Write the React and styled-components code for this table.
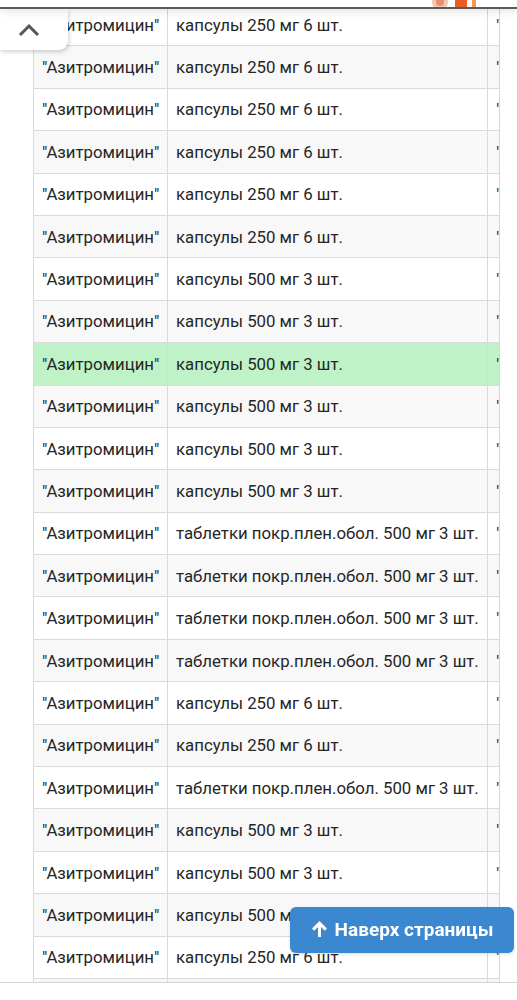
import React from "react";
import styled, { createGlobalStyle } from "styled-components";

const GlobalStyle = createGlobalStyle`
  html, body {
    margin: 0;
    padding: 0;
    background: #fff;
    font-family: Roboto, "Noto Sans", "Liberation Sans", sans-serif;
    color: #262626;
  }
`;

const Header = styled.div`
  position: fixed;
  top: 0;
  left: 0;
  right: 0;
  height: 7px;
  background: #fff;
  border-bottom: 2px solid #5a5a5a;
  box-shadow: 0 2px 8px rgba(0, 0, 0, 0.12);
  z-index: 5;
  overflow: hidden;
`;

const Logo = styled.svg`
  position: absolute;
  left: 428px;
  top: -10px;
`;

const CollapseButton = styled.button`
  position: fixed;
  top: 9px;
  left: 0;
  width: 68px;
  height: 41px;
  background: #fff;
  border: 0;
  border-radius: 0 0 9px 0;
  box-shadow: 1px 2px 4px rgba(0, 0, 0, 0.18);
  display: flex;
  align-items: center;
  justify-content: center;
  padding: 0 10px 0 0;
  z-index: 4;
`;

const Main = styled.div`
  padding: 3px 0 40px 33px;
`;

const TableWrap = styled.div`
  width: 466px;
  overflow: hidden;
  border-right: 1px solid #d6d6d6;
`;

const Table = styled.table`
  border-collapse: collapse;
  table-layout: fixed;
  width: 700px;
  font-size: 16.8px;
`;

const Row = styled.tr`
  height: 42.4px;
  background: ${p => (p.$active ? "#bff3c7" : p.$odd ? "#f8f8f8" : "#fff")};
`;

const Cell = styled.td`
  border: 1px solid #dadada;
  padding: 0 8px;
  white-space: nowrap;
  overflow: hidden;
  vertical-align: middle;
  line-height: 20px;
`;

const ToTopButton = styled.button`
  position: fixed;
  left: 290px;
  top: 907px;
  width: 224px;
  height: 46px;
  background: #3b87d0;
  color: #fff;
  border: 0;
  border-radius: 6px;
  font-family: Roboto, "Liberation Sans", sans-serif;
  font-weight: 700;
  font-size: 19px;
  display: flex;
  align-items: center;
  justify-content: center;
  gap: 7px;
  padding: 0 0 2px 0;
  z-index: 4;
  box-shadow: 0 1px 3px rgba(0, 0, 0, 0.15);
`;

const BottomBar = styled.div`
  position: fixed;
  left: 0;
  right: 0;
  bottom: 0;
  height: 17px;
  background: #fff;
  border-top: 1px solid #d4d4d4;
  z-index: 3;
`;

const rows = [
  "капсулы 250 мг 6 шт.",
  "капсулы 250 мг 6 шт.",
  "капсулы 250 мг 6 шт.",
  "капсулы 250 мг 6 шт.",
  "капсулы 250 мг 6 шт.",
  "капсулы 250 мг 6 шт.",
  "капсулы 500 мг 3 шт.",
  "капсулы 500 мг 3 шт.",
  "капсулы 500 мг 3 шт.",
  "капсулы 500 мг 3 шт.",
  "капсулы 500 мг 3 шт.",
  "капсулы 500 мг 3 шт.",
  "таблетки покр.плен.обол. 500 мг 3 шт.",
  "таблетки покр.плен.обол. 500 мг 3 шт.",
  "таблетки покр.плен.обол. 500 мг 3 шт.",
  "таблетки покр.плен.обол. 500 мг 3 шт.",
  "капсулы 250 мг 6 шт.",
  "капсулы 250 мг 6 шт.",
  "таблетки покр.плен.обол. 500 мг 3 шт.",
  "капсулы 500 мг 3 шт.",
  "капсулы 500 мг 3 шт.",
  "капсулы 500 мг 3 шт.",
  "капсулы 250 мг 6 шт.",
  "капсулы 250 мг 6 шт.",
];

const ChevronUp = () => (
  <svg width="22" height="14" viewBox="0 0 22 14" aria-hidden="true">
    <path d="M2 12 L11 3 L20 12" fill="none" stroke="#555" strokeWidth="3" />
  </svg>
);

const ArrowUp = () => (
  <svg width="17" height="18" viewBox="0 0 17 18" aria-hidden="true">
    <path d="M8.5 1 L16 8.5 L13.8 10.7 L10 6.9 L10 17 L7 17 L7 6.9 L3.2 10.7 L1 8.5 Z" fill="#fff" />
  </svg>
);

export default function App() {
  return (
    <>
      <GlobalStyle />
      <Header>
        <Logo width="80" height="20" viewBox="0 0 80 20">
          <circle cx="12" cy="12" r="8" fill="#f3c7b4" />
          <circle cx="12" cy="12" r="4" fill="#e98e6f" />
          <rect x="27" y="4" width="12" height="14" fill="#ee5a24" />
          <rect x="44" y="6" width="4" height="12" fill="#f39a4d" />
        </Logo>
      </Header>
      <CollapseButton aria-label="Свернуть">
        <ChevronUp />
      </CollapseButton>
      <Main>
        <TableWrap>
          <Table>
            <colgroup>
              <col style={{ width: 134 }} />
              <col style={{ width: 320 }} />
              <col style={{ width: 246 }} />
            </colgroup>
            <tbody>
              {rows.map((form, i) => (
                <Row key={i} $odd={i % 2 === 1} $active={i === 8}>
                  <Cell>"Азитромицин"</Cell>
                  <Cell>{form}</Cell>
                  <Cell>"Хемофарм" АО</Cell>
                </Row>
              ))}
            </tbody>
          </Table>
        </TableWrap>
      </Main>
      <ToTopButton>
        <ArrowUp />
        Наверх страницы
      </ToTopButton>
      <BottomBar />
    </>
  );
}
